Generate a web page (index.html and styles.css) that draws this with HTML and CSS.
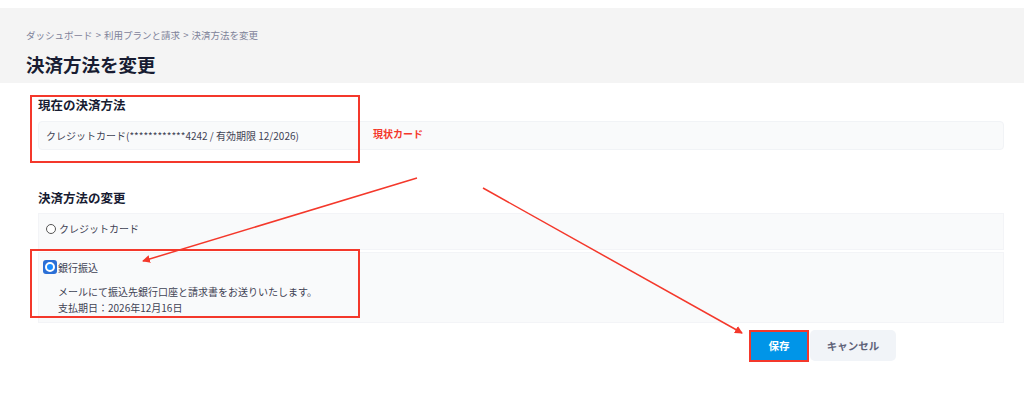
FILE: index.html
```html
<!DOCTYPE html>
<html lang="ja">
<head>
  <meta charset="UTF-8" />
  <meta name="viewport" content="width=device-width, initial-scale=1.0"/>
  <title>決済方法を変更</title>
  <link rel="stylesheet" href="styles.css">
</head>
<body>
  <div class="header">
    <div class="breadcrumb">ダッシュボード &gt; 利用プランと請求 &gt; 決済方法を変更</div>
    <h1>決済方法を変更</h1>
  </div>

  <div class="main">
    <h2 class="first">現在の決済方法</h2>
    <div class="card">クレジットカード(************4242 / 有効期限 12/2026)</div>

    <h2>決済方法の変更</h2>
    <div class="options">
      <label class="option">
        <span class="radio"></span>クレジットカード
      </label>
      <div class="option selected">
        <div class="opt-head"><span class="radio on"><span></span></span>銀行振込</div>
        <p>メールにて振込先銀行口座と請求書をお送りいたします。</p>
        <p>支払期日：2026年12月16日</p>
      </div>
    </div>

    <div class="actions">
      <button class="btn primary">保存</button>
      <button class="btn">キャンセル</button>
    </div>
  </div>

  <!-- annotations -->
  <div class="mark mark-current"></div>
  <div class="mark mark-bank"></div>
  <div class="mark mark-save"></div>
  <div class="note">現状カード</div>
  <svg class="arrows" width="1024" height="400" viewBox="0 0 1024 400">
    <defs>
      <marker id="head" markerWidth="8" markerHeight="8" refX="7" refY="4" orient="auto" markerUnits="userSpaceOnUse">
        <path d="M0 0 L8 4 L0 8 Z" fill="#f4382b"/>
      </marker>
    </defs>
    <line x1="417" y1="178" x2="143" y2="261" stroke="#f4382b" stroke-width="1.5" marker-end="url(#head)"/>
    <line x1="483" y1="188" x2="742" y2="333" stroke="#f4382b" stroke-width="1.5" marker-end="url(#head)"/>
  </svg>
</body>
</html>
```

FILE: styles.css
```css
/* Base */
* { box-sizing: border-box; margin: 0; padding: 0; }
body { font-family: 'Noto Sans CJK JP', 'Noto Sans', sans-serif; background: #fff; color: #3f4254; width: 1024px; height: 400px; overflow: hidden; position: relative; }

.header { margin-top: 8px; height: 75px; background: #f4f4f4; padding: 20px 26px 0; }
.breadcrumb { font-size: 9.5px; line-height: 14px; color: #7e8299; word-spacing: 1px; }
.header h1 { font-size: 18.5px; line-height: 26px; font-weight: 700; color: #181c32; margin-top: 9px; }

.main { padding: 0 20px 0 38px; }
h2 { font-size: 12.5px; line-height: 16px; font-weight: 700; color: #181c32; margin-top: 40px; }
h2.first { margin-top: 14px; }

.card { margin-top: 8px; height: 29px; background: #f9fafb; border: 1px solid #f1f3f6; border-radius: 4px; padding: 0 7px; display: flex; align-items: center; font-size: 10px; }

.options { margin-top: 7px; display: grid; gap: 2px; }
.option { background: #f9fafb; border: 1px solid #f3f4f7; font-size: 10px; }
label.option { height: 37px; display: flex; align-items: flex-start; padding: 8px 0 0 7px; line-height: 14px; }
label.option .radio { margin-top: 2px; }
.option.selected { height: 71px; padding: 7px 0 0 4px; }
.opt-head { display: flex; align-items: center; height: 14px; }
.option p { margin-left: 15px; line-height: 16px; }
.option p:first-of-type { margin-top: 10px; }

.radio { width: 10px; height: 10px; border: 1px solid #555; border-radius: 50%; background: #fff; margin-right: 3px; flex: none; }
.radio.on { width: 14px; height: 14px; border: none; border-radius: 3px; background: #2b6fd6; display: flex; align-items: center; justify-content: center; margin-right: 1px; }
.radio.on span { width: 10px; height: 10px; border-radius: 50%; background: #1a8cff; border: 2px solid #fff; }

.actions { display: flex; gap: 2px; margin-top: 7px; padding-left: 712px; }
.btn { height: 31px; border: none; border-radius: 5px; font-family: inherit; font-size: 10.5px; font-weight: 700; background: #f1f4f8; color: #5e6278; width: 86px; }
.btn.primary { background: #0095e8; color: #fff; width: 58px; border-radius: 2px; }

/* annotations */
.mark { position: absolute; border: 2px solid #f4382b; }
.mark-current { left: 30px; top: 95px; width: 330px; height: 68px; }
.mark-bank { left: 30px; top: 249px; width: 330px; height: 69px; }
.mark-save { left: 749px; top: 330px; width: 60px; height: 32px; }
.note { position: absolute; left: 373px; top: 126px; font-size: 10px; font-weight: 700; color: #f4382b; }
.arrows { position: absolute; left: 0; top: 0; pointer-events: none; }
```
